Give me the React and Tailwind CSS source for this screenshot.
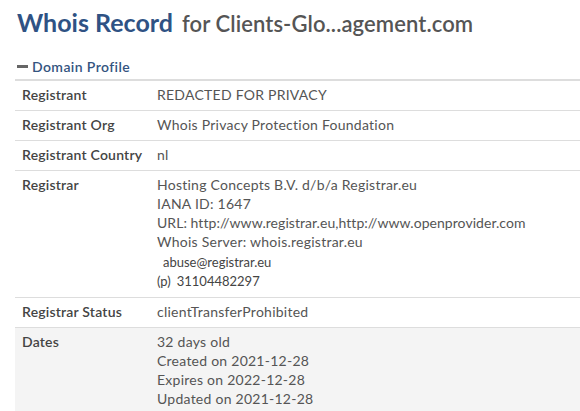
const rows = [
  { label: "Registrant", lines: ["REDACTED FOR PRIVACY"] },
  { label: "Registrant Org", lines: ["Whois Privacy Protection Foundation"] },
  { label: "Registrant Country", lines: ["nl"] },
  {
    label: "Registrar",
    lines: [
      "Hosting Concepts B.V. d/b/a Registrar.eu",
      "IANA ID: 1647",
      "URL: http://www.registrar.eu,http://www.openprovider.com",
      "Whois Server: whois.registrar.eu",
    ],
    contact: true,
  },
  { label: "Registrar Status", lines: ["clientTransferProhibited"] },
  {
    label: "Dates",
    lines: [
      "32 days old",
      "Created on 2021-12-28",
      "Expires on 2022-12-28",
      "Updated on 2021-12-28",
    ],
    shaded: true,
  },
];

function App() {
  return (
    <div
      className="w-[580px] h-[411px] overflow-hidden bg-white pl-[15px]"
      style={{ fontFamily: "Lato, 'Open Sans', sans-serif" }}
    >
      <h1 className="pt-[6px] pl-[2px] leading-[32px] whitespace-nowrap">
        <span className="text-[25px] font-bold text-[#2f5284]">Whois Record</span>
        <span className="text-[22px] font-semibold text-[#555555] ml-[9px] tracking-[0.1px]">
          for Clients-Glo...agement.com
        </span>
      </h1>
      <div className="mt-[15px] flex items-center h-[18px] text-[14px] font-semibold text-[#34547f] tracking-[0.4px]">
        <span className="w-[11px] h-[3px] bg-[#666666] ml-[2px] mr-[4px]"></span>
        Domain Profile
      </div>
      <table className="mt-[4px] w-full border-t-2 border-[#dddddd] text-[14px] border-collapse">
        <tbody>
          {rows.map((row) => (
            <tr
              key={row.label}
              className={`border-b border-[#dddddd] align-top ${row.shaded ? "bg-[#f4f4f4]" : ""}`}
            >
              <td className="w-[142px] pl-[7px] pt-[4px] pb-[6px] font-semibold text-[#444444] leading-[19px] whitespace-nowrap tracking-[0.2px]">
                {row.label}
              </td>
              <td className="pt-[4px] pb-[6px] text-[#555555] leading-[19px] tracking-[0.25px]">
                {row.lines.map((l) => (
                  <div
                    key={l}
                    className={`whitespace-nowrap ${l.startsWith("URL") ? "tracking-[0.05px]" : ""}`}
                  >
                    {l}
                  </div>
                ))}
                {row.contact && (
                  <div className="mt-[2px] text-[13px] text-[#444444] tracking-normal">
                    <div className="pl-[6px] leading-[19px]">abuse@registrar.eu</div>
                    <div className="leading-[19px]">
                      (p)<span className="ml-[6px]">31104482297</span>
                    </div>
                  </div>
                )}
              </td>
            </tr>
          ))}
        </tbody>
      </table>
    </div>
  );
}

export default App;
